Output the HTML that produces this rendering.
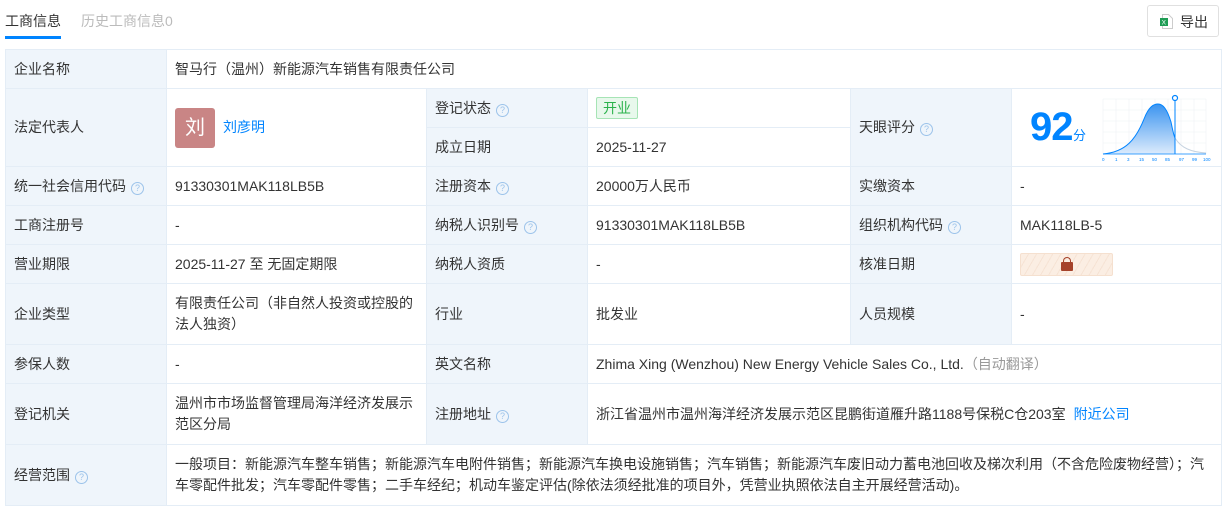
<!DOCTYPE html><html><head><meta charset="utf-8"><style>
body{margin:0;background:#fff;font-family:"Liberation Sans","Noto Sans CJK SC",sans-serif;font-size:14px;color:#333;width:1225px;height:511px;overflow:hidden;position:relative}
.tab1{position:absolute;left:5px;top:11px;font-size:14px;color:#333}
.tab1:after{content:"";position:absolute;left:0;right:0;top:25px;height:3px;background:#0084ff}
.tab2{position:absolute;left:81px;top:11px;color:#bbb}
.btn{position:absolute;left:1147px;top:5px;width:72px;height:32px;border:1px solid #e0e0e0;border-radius:3px;box-sizing:border-box;font-size:14px;color:#333}
table{position:absolute;left:5px;top:49px;border-collapse:collapse;table-layout:fixed;width:1216px}
td{border:1px solid #e4edf6;padding:0 0 0 8px;vertical-align:middle;line-height:21px}
td.l{background:#eff5fb;color:#333}
.q{display:inline-block;width:11px;height:11px;border:1px solid #9cc3ea;border-radius:50%;font-size:9px;line-height:11px;text-align:center;color:#9cc3ea;margin-left:5px;vertical-align:0px}
.blue{color:#0084ff}
</style></head><body>
<div class="tab1">工商信息</div><div class="tab2">历史工商信息0</div>
<div class="btn"><svg style="position:absolute;left:12px;top:8px" width="13" height="15"><path d="M2.5 .5h6l4 4v10h-10z" fill="#fff" stroke="#ccc"/><rect x="0" y="4" width="8" height="8" fill="#1f9d55"/><text x="1.6" y="10.5" font-size="6.5" fill="#fff" font-family="Liberation Sans">X</text></svg><span style="position:absolute;left:32px;top:6px">导出</span></div>
<table>
<colgroup><col style="width:161px"><col style="width:260px"><col style="width:161px"><col style="width:263px"><col style="width:161px"><col style="width:210px"></colgroup>
<tr style="height:39px"><td class="l">企业名称</td><td colspan="5">智马行（温州）新能源汽车销售有限责任公司</td></tr>
<tr style="height:39px"><td class="l" rowspan="2">法定代表人</td><td rowspan="2"><span style="display:inline-block;width:40px;height:40px;background:#c98585;border-radius:3px;color:#fff;font-size:20px;line-height:40px;text-align:center;vertical-align:middle">刘</span><span class="blue" style="margin-left:8px;vertical-align:middle">刘彦明</span></td><td class="l">登记状态<span class="q">?</span></td><td><span style="display:inline-block;border:1px solid #a6e4b5;background:#e8f8ec;color:#2bb24c;padding:0 6px;line-height:20px;border-radius:2px">开业</span></td><td class="l" rowspan="2">天眼评分<span class="q">?</span></td><td rowspan="2" style="position:relative"><span style="position:absolute;left:18px;top:18px;font-size:40px;font-weight:bold;color:#0084ff;line-height:40px;letter-spacing:-1px">92</span><span style="position:absolute;left:61px;top:36px;color:#0084ff;font-size:13px">分</span>
<svg style="position:absolute;left:88px;top:5px" width="112" height="70" viewBox="0 0 110 70"><defs><linearGradient id="g" x1="0" y1="0" x2="0" y2="1"><stop offset="0" stop-color="#3b94f0"/><stop offset="1" stop-color="#dcebfc"/></linearGradient></defs>
<g stroke="#eef2f6" stroke-width=".6"><path d="M2 5v55M15 5v55M28 5v55M41 5v55M54 5v55M67 5v55M80 5v55M93 5v55M105 5v55M2 5h103M2 16h103M2 27h103M2 38h103M2 49h103"/></g>
<path d="M2 60C25 58 35 45 43 25C48 12 53 10 57 10C62 10 66 15 70 28C72 38 73 42 74 44L74 60Z" fill="url(#g)"/>
<path d="M2 60C25 58 35 45 43 25C48 12 53 10 57 10C62 10 66 15 70 28C72 38 73 42 74 44" fill="none" stroke="#0084ff" stroke-width="1"/>
<path d="M74 44C80 54 90 58 105 59" fill="none" stroke="#c6d3e0" stroke-width="1"/>
<path d="M2 60h103" stroke="#0084ff" stroke-width=".8"/>
<path d="M74 4v56" stroke="#0084ff" stroke-width="1"/><circle cx="74" cy="4" r="2.5" fill="#fff" stroke="#0084ff" stroke-width="1.2"/>
<g font-size="4.5" fill="#0084ff" font-family="Liberation Sans"><text x="1" y="67">0</text><text x="14" y="67">1</text><text x="26" y="67">3</text><text x="38" y="67">15</text><text x="51" y="67">50</text><text x="64" y="67">85</text><text x="78" y="67">97</text><text x="91" y="67">99</text><text x="102" y="67">100</text></g></svg></td></tr>
<tr style="height:39px"><td class="l">成立日期</td><td>2025-11-27</td></tr>
<tr style="height:39px"><td class="l">统一社会信用代码<span class="q">?</span></td><td>91330301MAK118LB5B</td><td class="l">注册资本<span class="q">?</span></td><td>20000万人民币</td><td class="l">实缴资本</td><td>-</td></tr>
<tr style="height:39px"><td class="l">工商注册号</td><td>-</td><td class="l">纳税人识别号<span class="q">?</span></td><td>91330301MAK118LB5B</td><td class="l">组织机构代码<span class="q">?</span></td><td>MAK118LB-5</td></tr>
<tr style="height:39px"><td class="l">营业期限</td><td>2025-11-27 至 无固定期限</td><td class="l">纳税人资质</td><td>-</td><td class="l">核准日期</td><td><span style="display:inline-block;width:91px;height:21px;border:1px solid #f5e0cf;border-radius:2px;background:repeating-linear-gradient(120deg,#fbeee3 0 6px,#f6e3d4 6px 7px);position:relative;vertical-align:middle"><span style="position:absolute;left:40px;top:8px;width:12px;height:9px;background:#a5422a;border-radius:1px"></span><span style="position:absolute;left:42px;top:3px;width:6px;height:6px;border:1.5px solid #a5422a;border-bottom:none;border-radius:4px 4px 0 0"></span></span></td></tr>
<tr style="height:61px"><td class="l">企业类型</td><td>有限责任公司（非自然人投资或控股的法人独资）</td><td class="l">行业</td><td>批发业</td><td class="l">人员规模</td><td>-</td></tr>
<tr style="height:39px"><td class="l">参保人数</td><td>-</td><td class="l">英文名称</td><td colspan="3">Zhima Xing (Wenzhou) New Energy Vehicle Sales Co., Ltd.<span style="color:#999">（自动翻译）</span></td></tr>
<tr style="height:61px"><td class="l">登记机关</td><td>温州市市场监督管理局海洋经济发展示范区分局</td><td class="l">注册地址<span class="q">?</span></td><td colspan="3">浙江省温州市温州海洋经济发展示范区昆鹏街道雁升路1188号保税C仓203室<span class="blue" style="margin-left:8px">附近公司</span></td></tr>
<tr style="height:61px"><td class="l">经营范围<span class="q">?</span></td><td colspan="5" style="padding-right:8px">一般项目：新能源汽车整车销售；新能源汽车电附件销售；新能源汽车换电设施销售；汽车销售；新能源汽车废旧动力蓄电池回收及梯次利用（不含危险废物经营）；汽车零配件批发；汽车零配件零售；二手车经纪；机动车鉴定评估(除依法须经批准的项目外，凭营业执照依法自主开展经营活动)。</td></tr>
</table>
</body></html>
